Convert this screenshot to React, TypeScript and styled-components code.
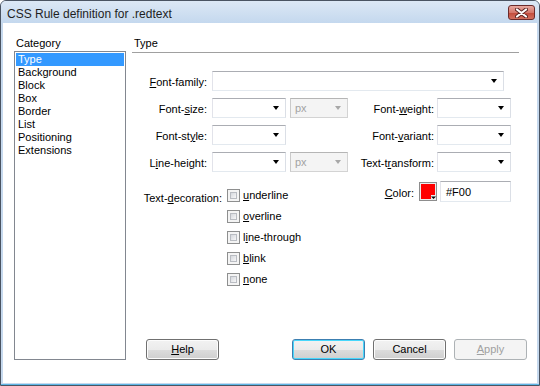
import React from "react"
import styled, { createGlobalStyle, css } from "styled-components"

const GlobalStyle = createGlobalStyle`
  html, body {
    margin: 0;
    padding: 0;
    background: #ffffff;
  }
  body {
    font-family: "Liberation Sans", Arial, sans-serif;
    font-size: 11px;
    color: #000000;
  }
`

const categories = [
  "Type",
  "Background",
  "Block",
  "Box",
  "Border",
  "List",
  "Positioning",
  "Extensions"
]

const decorations: Array<[string, string, string]> = [
  ["", "u", "nderline"],
  ["", "o", "verline"],
  ["l", "i", "ne-through"],
  ["", "b", "link"],
  ["", "n", "one"]
]

const App: React.FC = () => {
  return (
    <>
      <GlobalStyle />
      <Window>
        <TitleBar>
          <Title>CSS Rule definition for .redtext</Title>
          <CloseButton>
            <svg width="13" height="10" viewBox="0 0 13 10">
              <path d="M2 1.5 L11 8.5 M11 1.5 L2 8.5" stroke="#5a2320" strokeWidth="4" strokeLinecap="round" />
              <path d="M2 1.5 L11 8.5 M11 1.5 L2 8.5" stroke="#ffffff" strokeWidth="2.2" strokeLinecap="round" />
            </svg>
          </CloseButton>
        </TitleBar>
        <Body>
          <Sidebar>
            <SideHeader>Category</SideHeader>
            <CategoryList>
              {categories.map((c, i) => (
                <CategoryItem key={c} $selected={i === 0}>{c}</CategoryItem>
              ))}
            </CategoryList>
          </Sidebar>
          <Main>
            <MainHeader>Type</MainHeader>
            <Form>
              <Row>
                <Label $w={75}><Acc>F</Acc>ont-family:</Label>
                <Combo $w={292} $ml={5}><Arrow /></Combo>
              </Row>
              <Row>
                <Label $w={75}>Font-<Acc>s</Acc>ize:</Label>
                <Combo $w={74} $ml={5}><Arrow /></Combo>
                <Combo $w={58} $ml={4} $disabled>px<Arrow $disabled /></Combo>
                <Label $w={86}>Font-<Acc>w</Acc>eight:</Label>
                <Combo $w={74} $ml={3}><Arrow /></Combo>
              </Row>
              <Row>
                <Label $w={75}>Font-st<Acc>y</Acc>le:</Label>
                <Combo $w={74} $ml={5}><Arrow /></Combo>
                <Gap $w={62} />
                <Label $w={86}>Font-<Acc>v</Acc>ariant:</Label>
                <Combo $w={74} $ml={3}><Arrow /></Combo>
              </Row>
              <Row>
                <Label $w={75}>L<Acc>i</Acc>ne-height:</Label>
                <Combo $w={74} $ml={5}><Arrow /></Combo>
                <Combo $w={58} $ml={4} $disabled>px<Arrow $disabled /></Combo>
                <Label $w={86}>Text-t<Acc>r</Acc>ansform:</Label>
                <Combo $w={74} $ml={3}><Arrow /></Combo>
              </Row>
              <DecoRow>
                <DecoBlock>
                  <Label $w={90}>Text-<Acc>d</Acc>ecoration:</Label>
                  <CheckList>
                    {decorations.map(([a, k, b]) => (
                      <CheckRow key={a + k + b}>
                        <Check />
                        <span>{a}<Acc>{k}</Acc>{b}</span>
                      </CheckRow>
                    ))}
                  </CheckList>
                </DecoBlock>
                <ColorBlock>
                  <Label $w={66}><Acc>C</Acc>olor:</Label>
                  <Swatch>
                    <svg width="18" height="19" viewBox="0 0 18 19">
                      <rect x="0.5" y="0.5" width="17" height="18" fill="#ececec" stroke="#8d8d8d" />
                      <polygon points="2,2 16,2 16,13 12,13 12,17 2,17" fill="#ff0000" />
                      <polygon points="12,14.5 17,14.5 14.5,17" fill="#000000" />
                    </svg>
                  </Swatch>
                  <TextBox>#F00</TextBox>
                </ColorBlock>
              </DecoRow>
            </Form>
            <ButtonBar>
              <Button><Acc>H</Acc>elp</Button>
              <Grow />
              <Button $primary>OK</Button>
              <Button>Cancel</Button>
              <Button $disabled><Acc>A</Acc>pply</Button>
            </ButtonBar>
          </Main>
        </Body>
      </Window>
    </>
  )
}

const Window = styled.div`
  width: 540px;
  height: 386px;
  box-sizing: border-box;
  border: 1px solid #4a5462;
  border-radius: 6px 6px 0 0;
  background: #c6d9ee;
  display: flex;
  flex-direction: column;
  padding: 0 2px 2px 2px;
  box-shadow: inset 0 -1px 0 #5cb6e6;
`

const TitleBar = styled.div`
  height: 22px;
  margin: 0 -2px;
  padding: 0 4px 0 6px;
  display: flex;
  align-items: flex-start;
  background: linear-gradient(#dce8f5, #c4d8ee);
  border-radius: 5px 5px 0 0;
`

const Title = styled.div`
  flex: 1;
  font-size: 12px;
  line-height: 14px;
  padding-top: 6px;
  color: #1e1e1e;
`

const CloseButton = styled.div`
  width: 27px;
  height: 15px;
  margin-top: 4px;
  box-sizing: border-box;
  border: 1px solid #6b2b2b;
  border-radius: 3px;
  background: linear-gradient(#e8a9a0, #d5776b 50%, #c24a3a 51%, #d3705f);
  display: flex;
  align-items: center;
  justify-content: center;
`

const Body = styled.div`
  flex: 1;
  background: #ffffff;
  display: flex;
  gap: 6px;
  padding: 13px 10px 23px 11px;
`

const Sidebar = styled.div`
  width: 112px;
  display: flex;
  flex-direction: column;
`

const SideHeader = styled.div`
  line-height: 14px;
  padding-left: 2px;
  margin-bottom: 1px;
`

const CategoryList = styled.div`
  flex: 1;
  border: 1px solid #828790;
  padding: 1px;
`

const CategoryItem = styled.div<{ $selected?: boolean }>`
  height: 13px;
  line-height: 13px;
  padding-left: 2px;
  ${(p) =>
    p.$selected &&
    css`
      background: #3399ff;
      color: #ffffff;
    `}
`

const Main = styled.div`
  flex: 1;
  display: flex;
  flex-direction: column;
`

const MainHeader = styled.div`
  line-height: 14px;
  padding: 0 0 2px 2px;
  margin-right: 8px;
  border-bottom: 1px solid #a0a0a0;
`

const Form = styled.div`
  display: flex;
  flex-direction: column;
  gap: 7px;
  margin-top: 18px;
`

const Row = styled.div`
  display: flex;
  align-items: center;
  height: 20px;
`

const Label = styled.div<{ $w: number }>`
  width: ${(p) => p.$w}px;
  flex: none;
  text-align: right;
  line-height: 13px;
  padding-top: 3px;
  white-space: nowrap;
`

const Acc = styled.span`
  text-decoration: underline;
`

const Combo = styled.div<{ $w: number; $ml?: number; $disabled?: boolean }>`
  position: relative;
  width: ${(p) => p.$w}px;
  height: 20px;
  margin-left: ${(p) => p.$ml ?? 0}px;
  box-sizing: border-box;
  flex: none;
  border: 1px solid #abadb3;
  border-color: #abadb3 #dbdfe6 #e3e9ef #e2e3ea;
  background: #ffffff;
  padding: 3px 0 0 4px;
  line-height: 13px;
  ${(p) =>
    p.$disabled &&
    css`
      background: #f4f4f4;
      border-color: #b5b5b5 #d3d3d3 #d3d3d3 #cacaca;
      color: #a3a3a3;
    `}
`

const Arrow = styled.span<{ $disabled?: boolean }>`
  position: absolute;
  right: 6px;
  top: 7px;
  width: 0;
  height: 0;
  border-left: 3.5px solid transparent;
  border-right: 3.5px solid transparent;
  border-top: 4px solid ${(p) => (p.$disabled ? "#a8a8a8" : "#000000")};
`

const Gap = styled.div<{ $w: number }>`
  width: ${(p) => p.$w}px;
  flex: none;
`

const DecoRow = styled.div`
  display: flex;
  align-items: flex-start;
  margin-top: 2px;
`

const DecoBlock = styled.div`
  width: 216px;
  display: flex;
  align-items: flex-start;
  padding-top: 8px;
`

const CheckList = styled.div`
  display: flex;
  flex-direction: column;
  gap: 8px;
  margin-left: 5px;
`

const CheckRow = styled.div`
  display: flex;
  align-items: center;
  gap: 3px;
  height: 13px;
  line-height: 13px;
  white-space: nowrap;
`

const Check = styled.span`
  width: 13px;
  height: 13px;
  box-sizing: border-box;
  border: 1px solid #8e8f8f;
  background: #f4f4f4;
  padding: 2px;
  &::after {
    content: "";
    display: block;
    width: 100%;
    height: 100%;
    box-sizing: border-box;
    border: 1px solid #b9bcc2;
    background: linear-gradient(135deg, #d5d8dd, #f7f7f8);
  }
`

const ColorBlock = styled.div`
  display: flex;
  align-items: center;
  height: 21px;
`

const Swatch = styled.div`
  width: 18px;
  height: 19px;
  margin-left: 5px;
  display: flex;
`

const TextBox = styled.div`
  width: 71px;
  height: 21px;
  margin-left: 3px;
  box-sizing: border-box;
  border: 1px solid #abadb3;
  border-color: #abadb3 #dbdfe6 #e3e9ef #e2e3ea;
  padding: 4px 0 0 5px;
  line-height: 13px;
`

const ButtonBar = styled.div`
  margin-top: auto;
  display: flex;
  gap: 8px;
  padding-left: 14px;
`

const Grow = styled.div`
  flex: 1;
`

const Button = styled.div<{ $primary?: boolean; $disabled?: boolean }>`
  width: 73px;
  height: 21px;
  box-sizing: border-box;
  border: 1px solid #707070;
  border-radius: 3px;
  background: linear-gradient(#f2f2f2, #ebebeb 50%, #dddddd 51%, #cfcfcf);
  box-shadow: inset 0 0 0 1px #fcfcfc;
  display: flex;
  align-items: center;
  justify-content: center;
  line-height: 13px;
  ${(p) =>
    p.$primary &&
    css`
      border-color: #3c7fb1;
      box-shadow: inset 0 0 0 1px #48d7fb;
    `}
  ${(p) =>
    p.$disabled &&
    css`
      border-color: #adb2b5;
      background: #f4f4f4;
      box-shadow: none;
      color: #a0a0a0;
    `}
`

export default App
